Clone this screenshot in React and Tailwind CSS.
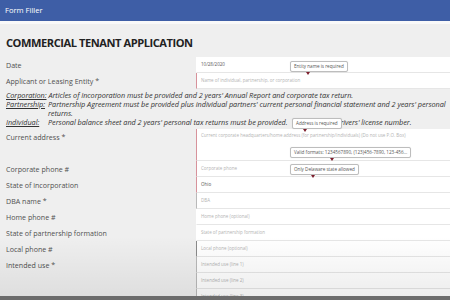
import React from "react";

const RED = "border-l-[#d7929b]";
const GRAY = "border-l-[#b9b9b9]";
const DARK = "border-l-[#8a8a8a]";

const fields = [
  { label: "Corporate phone #", placeholder: "Corporate phone", edge: RED },
  { label: "State of incorporation", value: "Ohio", edge: RED },
  { label: "DBA name *", placeholder: "DBA", edge: GRAY },
  { label: "Home phone #", placeholder: "Home phone (optional)", edge: "border-l-transparent" },
  { label: "State of partnership formation", placeholder: "State of partnership formation", edge: "border-l-transparent" },
  { label: "Local phone #", placeholder: "Local phone (optional)", edge: DARK },
];

const Input = ({ placeholder, value, edge = "border-l-transparent", tall = false }) => (
  <div
    className={`bg-white border-l-[1.5px] ${edge} border-b border-b-[#e6e6e6] pl-[4px] flex ${
      tall ? "h-[32px] items-start pt-[3px]" : "h-[16px] items-center"
    } text-[4.5px] whitespace-nowrap ${value ? "text-[#555]" : "text-[#b3b3b3]"}`}
  >
    {value || placeholder}
  </div>
);

const Row = ({ label, children, top = false }) => (
  <div className="flex">
    <div
      className={`w-[190px] shrink-0 flex text-[7.1px] text-[#505050] ${
        top ? "items-start pt-[3px]" : "items-center"
      }`}
    >
      {label}
    </div>
    <div className="flex-1">{children}</div>
  </div>
);

const Tip = ({ text, className, arrow }) => (
  <div className={`absolute ${className}`}>
    <div className="bg-white border border-[#bdbdbd] rounded-[2px] h-[11px] px-[3px] flex items-center text-[4.6px] text-[#555] whitespace-nowrap shadow-[0_0_1px_rgba(0,0,0,0.15)]">
      {text}
    </div>
    <div
      className="w-0 h-0 border-l-[2.5px] border-r-[2.5px] border-t-[3px] border-l-transparent border-r-transparent border-t-[#7d1e2c]"
      style={{ marginLeft: arrow }}
    />
  </div>
);

export default function App() {
  return (
    <div
      className="relative w-[450px] h-[300px] overflow-hidden bg-[#efefef]"
      style={{ fontFamily: '"Open Sans", "Noto Sans", sans-serif' }}
    >
      <div className="h-[21px] bg-[#3e5ea6] flex items-center px-[5px] text-white text-[7.6px]">
        Form Filler
      </div>
      <div className="h-[3px] bg-[#f9f9f9]" />

      <div className="pl-[6px] w-[560px]">
        <h1 className="mt-[11px] h-[16px] flex items-center text-[11.1px] font-bold text-[#222] tracking-[-0.45px]">
          COMMERCIAL TENANT APPLICATION
        </h1>

        <div className="mt-[6px]">
          <Row label="Date">
            <Input value="10/28/2020" />
          </Row>
          <Row label="Applicant or Leasing Entity *">
            <Input placeholder="Name of individual, partnership, or corporation" edge={RED} />
          </Row>

          <div className="py-[2px] text-[7.3px] italic text-[#333] leading-[9px] tracking-[-0.04px]">
            <div className="whitespace-nowrap">
              <span className="underline">Corporation:</span> Articles of Incorporation must be provided
              and 2 years' Annual Report and corporate tax return.
            </div>
            <div className="flex">
              <span className="underline w-[42px] shrink-0">Partnership:</span>
              <div className="w-[402px]">
                Partnership Agreement must be provided plus individual partners' current personal
                financial statement and 2 years' personal returns.
              </div>
            </div>
            <div className="flex">
              <span className="underline w-[42px] shrink-0">Individual:</span>
              <span className="whitespace-nowrap">
                Personal balance sheet and 2 years' personal tax returns must be provided.
                <span className="inline-block w-[48px]" />
                Drivers' license number.
              </span>
            </div>
          </div>

          <Row label="Current address *" top>
            <Input
              placeholder="Current corporate headquarters/home address (for partnership/individuals) (Do not use P.O. Box)"
              edge={RED}
              tall
            />
          </Row>
          {fields.map((f) => (
            <Row key={f.label} label={f.label}>
              <Input {...f} />
            </Row>
          ))}
          <Row label="Intended use *">
            <Input placeholder="Intended use (line 1)" edge={GRAY} />
          </Row>
          <Row label="">
            <Input placeholder="Intended use (line 2)" edge={GRAY} />
          </Row>
          <Row label="">
            <Input placeholder="Intended use (line 3)" edge={GRAY} />
          </Row>
        </div>
      </div>

      <Tip text="Entity name is required" className="left-[290px] top-[61px]" arrow={16} />
      <Tip text="Address is required" className="left-[292px] top-[118px]" arrow={11} />
      <Tip
        text="Valid formats: 1234567890, (123)456-7890, 123-456..."
        className="left-[290px] top-[147px]"
        arrow={40}
      />
      <Tip text="Only Delaware state allowed" className="left-[290px] top-[164px]" arrow={21} />

      <div className="absolute left-0 right-0 top-[236px] h-[60px] bg-gradient-to-b from-transparent to-[rgba(0,0,0,0.07)] pointer-events-none" />
      <div className="absolute left-0 right-0 bottom-0 h-[4px] bg-[#6c6c6c]" />
    </div>
  );
}
